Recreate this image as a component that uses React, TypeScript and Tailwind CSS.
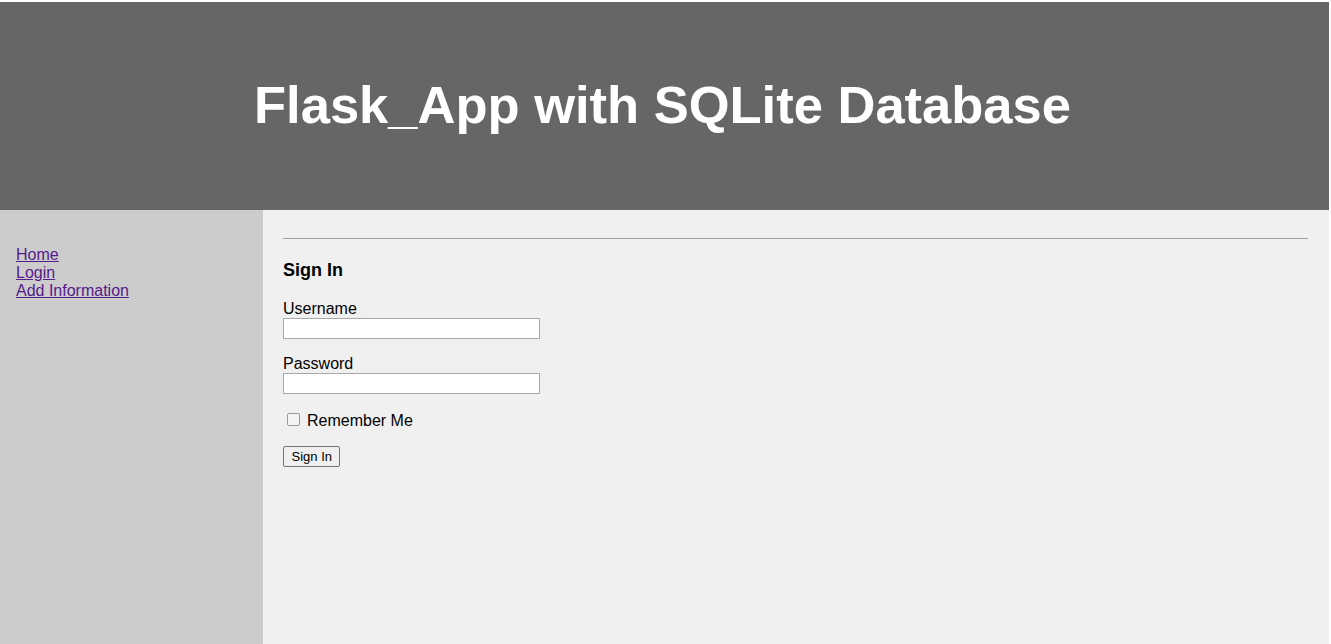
import React from "react";

export default function App() {
  return (
    <div className="w-[1331px] h-[644px] bg-white pt-[2px] pr-[2px] overflow-hidden" style={{ fontFamily: '"Liberation Sans", Arial, sans-serif' }}>
      <header className="h-[208px] bg-[#666666] flex items-center justify-center pr-[4px]">
        <h1 className="text-white font-bold text-[52.5px] leading-none m-0 -mt-[1px]">Flask_App with SQLite Database</h1>
      </header>
      <div className="flex h-[434px]">
        <nav className="w-[263px] bg-[#cccccc] pt-[36px] pl-[16px] flex flex-col text-[16px] leading-[18px]">
          <a href="#" className="underline text-[#551a8b] w-fit">Home</a>
          <a href="#" className="underline text-[#551a8b] w-fit">Login</a>
          <a href="#" className="underline text-[#551a8b] w-fit">Add Information</a>
        </nav>
        <main className="flex-1 bg-[#f0f0f0] pl-[20px] pr-[21px] pt-[28px] text-black">
          <div className="border-t border-[#a0a0a0]" />
          <h3 className="font-bold text-[18px] leading-[21px] mt-[21px]">Sign In</h3>
          <div className="mt-[19px] flex flex-col">
            <label className="text-[16px] leading-[18px]">Username</label>
            <input type="text" className="w-[257px] h-[21px] bg-white border border-[#a9a9a9] outline-none" />
          </div>
          <div className="mt-[16px] flex flex-col">
            <label className="text-[16px] leading-[18px]">Password</label>
            <input type="password" className="w-[257px] h-[21px] bg-white border border-[#a9a9a9] outline-none" />
          </div>
          <label className="mt-[18px] flex items-center h-[18px] w-fit">
            <input
              type="checkbox"
              className="appearance-none m-0 ml-[4px] mb-[3px] w-[13px] h-[13px] border border-[#9a9a9a] rounded-[2px] bg-[#f4f4f4] checked:bg-[#0075ff] checked:border-[#0075ff]"
            />
            <span className="ml-[7px] text-[16px] leading-[18px]">Remember Me</span>
          </label>
          <button className="mt-[16px] h-[21px] px-[7.5px] text-[13px] leading-none border border-[#767676] bg-[#efefef] rounded-[2px] text-black">Sign In</button>
        </main>
      </div>
    </div>
  );
}
